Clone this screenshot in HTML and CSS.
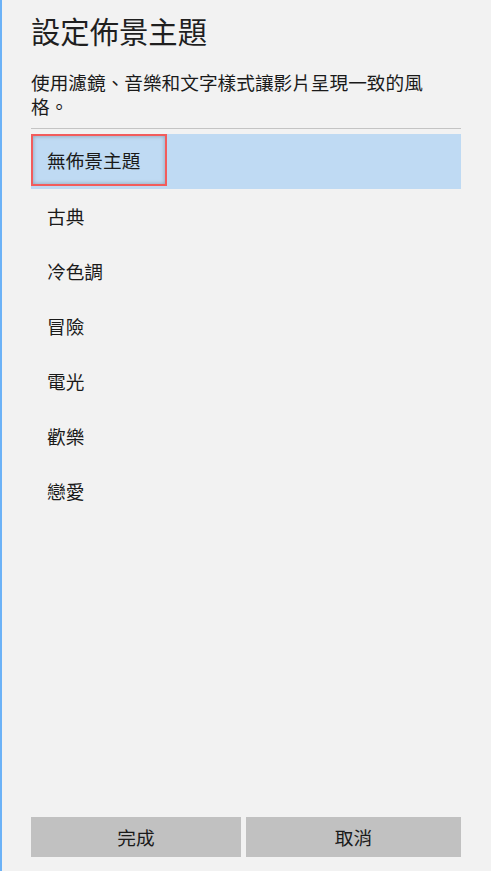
FILE: index.html
```html
<!DOCTYPE html>
<html lang="zh-Hant">
<head>
<meta charset="utf-8">
<title>設定佈景主題</title>
<link rel="stylesheet" href="styles.css">
</head>
<body>
<div class="dialog">
  <h1 class="title">設定佈景主題</h1>
  <p class="desc">使用濾鏡、音樂和文字樣式讓影片呈現一致的風格。</p>
  <div class="divider"></div>
  <ul class="list">
    <li class="item selected"><span class="focus">無佈景主題</span></li>
    <li class="item">古典</li>
    <li class="item">冷色調</li>
    <li class="item">冒險</li>
    <li class="item">電光</li>
    <li class="item">歡樂</li>
    <li class="item">戀愛</li>
  </ul>
  <div class="buttons">
    <button class="btn btn-done">完成</button>
    <button class="btn btn-cancel">取消</button>
  </div>
</div>
</body>
</html>
```
FILE: styles.css
```css
html, body {
  margin: 0;
  padding: 0;
  height: 100%;
  background: #f2f2f2;
}
body {
  font-family: "Noto Sans CJK TC", "Noto Sans", sans-serif;
  color: #000;
}
.dialog {
  box-sizing: border-box;
  height: 871px;
  border-left: 2px solid #6cb2f7;
  padding: 10px 30px 14px 29px;
  display: flex;
  flex-direction: column;
}
.title {
  margin: 0;
  font-size: 29.33px;
  line-height: 40px;
  font-weight: 400;
  color: #1f1f1f;
}
.desc {
  margin: 20px 0 0 0;
  max-width: 400px;
  font-size: 18.67px;
  line-height: 23.5px;
  color: #1a1a1a;
}
.divider {
  margin-top: 11px;
  height: 1px;
  background: #c4c4c4;
}
.list {
  list-style: none;
  margin: 5px 0 0 0;
  padding: 0;
}
.item {
  box-sizing: border-box;
  height: 55px;
  display: flex;
  align-items: center;
  padding: 0 0 3px 16px;
  font-size: 18.67px;
  color: #1a1a1a;
}
.item.selected {
  background: #bfdaf3;
  padding: 0;
  align-items: flex-start;
}
.focus {
  box-sizing: border-box;
  display: flex;
  align-items: center;
  height: 52px;
  width: 136px;
  padding: 0 0 1px 14px;
  border: 2px solid #f25c5c;
  box-shadow: inset 0 0 4px rgba(0, 0, 0, 0.28);
}
.buttons {
  margin-top: auto;
  display: flex;
  gap: 5px;
}
.btn {
  height: 40px;
  border: none;
  background: #c1c1c1;
  font-family: "Noto Sans CJK TC", "Noto Sans", sans-serif;
  font-size: 18.67px;
  color: #1a1a1a;
  padding: 0 0 2px 0;
}
.btn-done {
  width: 210px;
}
.btn-cancel {
  flex: 1;
}
```
